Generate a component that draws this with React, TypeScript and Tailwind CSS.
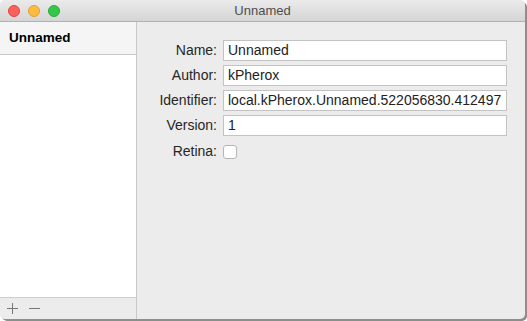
import React from "react";

const fields = [
  { label: "Name:", value: "Unnamed" },
  { label: "Author:", value: "kPherox" },
  { label: "Identifier:", value: "local.kPherox.Unnamed.522056830.412497" },
  { label: "Version:", value: "1" },
];

function TrafficLights() {
  return (
    <div className="absolute left-[8px] top-[5px] flex gap-[8px]">
      <span className="w-[12px] h-[12px] rounded-full bg-[#fc605c] border border-[#e0443e]" />
      <span className="w-[12px] h-[12px] rounded-full bg-[#fdbc40] border border-[#dea236]" />
      <span className="w-[12px] h-[12px] rounded-full bg-[#34c84a] border border-[#27aa35]" />
    </div>
  );
}

export default function App() {
  return (
    <div className="w-[527px] h-[321px] bg-white" style={{ fontFamily: '"Liberation Sans", Arial, sans-serif' }}>
      <div className="w-[525px] h-[319px] rounded-[5px] overflow-hidden flex flex-col bg-[#ececec] shadow-[2px_2px_0_0_#8e8e8e]">
        {/* title bar */}
        <div className="relative h-[22px] shrink-0 bg-gradient-to-b from-[#ebebeb] to-[#d5d5d5] border-b border-[#b1b1b1] flex items-center justify-center">
          <TrafficLights />
          <span className="text-[13px] text-[#4d4d4d] leading-none">Unnamed</span>
        </div>

        <div className="flex flex-1 min-h-0">
          {/* sidebar */}
          <div className="w-[137px] shrink-0 flex flex-col border-r border-[#c8c8c8]">
            <div className="h-[33px] shrink-0 bg-[#f5f5f5] border-b border-[#c8c8c8] flex items-center pl-[9px]">
              <span className="text-[13.5px] font-bold text-black">Unnamed</span>
            </div>
            <div className="flex-1 bg-white" />
            <div className="h-[22px] shrink-0 border-t border-[#cfcfcf] bg-[#ececec] flex items-center gap-[9px] pl-[6px]">
              <svg width="13" height="13" viewBox="0 0 13 13" stroke="#777" strokeWidth="1" fill="none">
                <path d="M6.5 1v11M1 6.5h11" />
              </svg>
              <svg width="13" height="13" viewBox="0 0 13 13" stroke="#777" strokeWidth="1" fill="none">
                <path d="M1 6.5h11" />
              </svg>
            </div>
          </div>

          {/* form */}
          <div className="flex-1 pt-[18px] pl-[19px] pr-[18px]">
            <div className="grid grid-cols-[auto_1fr] gap-x-[6px] gap-y-[4px] items-center">
              {fields.map((f) => (
                <React.Fragment key={f.label}>
                  <span className="text-[14px] text-[#262626] text-right w-[61px]">{f.label}</span>
                  <div className="h-[21px] bg-white border border-[#c3c3c3] flex items-center pl-[4px] text-[14px] text-[#222] overflow-hidden whitespace-nowrap">
                    {f.value}
                  </div>
                </React.Fragment>
              ))}
              <span className="text-[14px] text-[#262626] text-right w-[61px] mt-[1px]">Retina:</span>
              <div className="mt-[1px]">
                <div className="w-[14px] h-[14px] bg-white border border-[#b5b5b5] rounded-[3px]" />
              </div>
            </div>
          </div>
        </div>
      </div>
    </div>
  );
}
